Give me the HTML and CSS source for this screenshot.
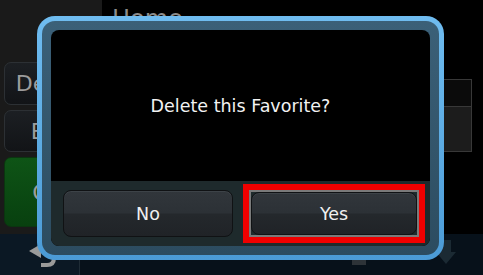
FILE: index.html
```html
<!DOCTYPE html>
<html>
<head>
<meta charset="utf-8">
<link rel="stylesheet" href="styles.css">
</head>
<body>
<div class="app">
  <aside class="side">
    <div class="side-btn">Delete</div>
    <div class="side-btn">Edit</div>
    <div class="side-btn go">Go!</div>
  </aside>
  <main class="main">
    <div class="title">Home</div>
    <div class="rows">
      <div class="row dark"></div>
      <div class="row"></div>
    </div>
  </main>
  <footer class="bar">
    <div class="bar-back">
      <svg width="30" height="30" viewBox="0 0 30 30">
        <polygon points="2,8 14,1 14,15" fill="#9a9a9a"/>
        <path d="M12 8 H20 Q27 8 27 15 Q27 22 20 22 H14" fill="none" stroke="#9a9a9a" stroke-width="4"/>
      </svg>
    </div>
    <div class="bar-rest">
      <span class="bar-mark"></span>
      <svg class="bar-down" width="20" height="26" viewBox="0 0 20 26">
        <polygon points="5,0 15,0 15,12 20,12 10,24 0,12 5,12" fill="#1b2a33"/>
      </svg>
    </div>
  </footer>
</div>

<div class="dialog">
  <div class="dialog-ring">
    <div class="dialog-inner">
      <div class="dialog-msg">Delete this Favorite?</div>
      <div class="dialog-actions">
        <div class="btn">No</div>
        <div class="btn-frame"><div class="btn">Yes</div></div>
      </div>
    </div>
  </div>
</div>
</body>
</html>
```
FILE: styles.css
```css
html, body {
  margin: 0;
  padding: 0;
  width: 483px;
  height: 275px;
  overflow: hidden;
  background: #000;
  font-family: "DejaVu Sans", "Liberation Sans", sans-serif;
}

.app {
  width: 483px;
  height: 275px;
  display: grid;
  grid-template-columns: 102px 1fr;
  grid-template-rows: 234px 41px;
}

.side {
  background: #1a1a1a;
  display: flex;
  flex-direction: column;
  gap: 5px;
  padding: 62px 0 0 4px;
  box-sizing: border-box;
}

.side-btn {
  width: 96px;
  height: 43px;
  box-sizing: border-box;
  border: 1px solid #2c3034;
  border-radius: 7px;
  background: linear-gradient(#1c1f23, #121417);
  color: #9c9c9c;
  font-size: 22px;
  display: flex;
  align-items: center;
  justify-content: center;
}

.side-btn + .side-btn {
  height: 42px;
}

.side-btn.go {
  height: 70px;
  background: linear-gradient(#0e5416, #08400f);
  border-color: #0b3510;
}

.main {
  padding-left: 10px;
  display: flex;
  flex-direction: column;
}

.title {
  margin-top: 7px;
  font-size: 24px;
  line-height: 24px;
  color: #8c8c8c;
}

.rows {
  margin-top: 48px;
  width: 360px;
  display: flex;
  flex-direction: column;
}

.row {
  height: 45px;
  box-sizing: border-box;
  background: #1c1c1c;
  border: 1px solid #383838;
  border-top: none;
}

.row.dark {
  height: 28px;
  background: #0b0b0b;
  border-top: 1px solid #383838;
}

.bar {
  grid-column: 1 / 3;
  display: flex;
  background: #07111a;
}

.bar-back {
  width: 80px;
  border-right: 1px solid #1f2c36;
  background: #0b1824;
  padding: 9px 0 0 27px;
  box-sizing: border-box;
}

.bar-rest {
  flex: 1;
  display: flex;
  align-items: flex-start;
  padding: 6px 0 0 272px;
}

.bar-mark {
  width: 14px;
  height: 7px;
  background: #2d3338;
  margin-top: 18px;
}

.bar-down {
  margin-left: 70px;
}

.dialog {
  position: absolute;
  left: 37px;
  top: 16px;
  width: 407px;
  height: 244px;
  box-sizing: border-box;
  padding: 5px;
  border-radius: 18px;
  background: linear-gradient(#6fbcf0, #4b9bd6);
}

.dialog-ring {
  height: 100%;
  box-sizing: border-box;
  padding: 9px;
  border-radius: 13px;
  background: linear-gradient(#3b6078, #2c4c60);
}

.dialog-inner {
  height: 100%;
  border-radius: 8px;
  overflow: hidden;
  display: flex;
  flex-direction: column;
  background: #000;
}

.dialog-msg {
  flex: 1;
  display: flex;
  align-items: center;
  justify-content: center;
  color: #f2f2f2;
  font-size: 17.5px;
  padding-top: 1px;
}

.dialog-actions {
  height: 65px;
  box-sizing: border-box;
  background: #1e2a2c;
  display: grid;
  grid-template-columns: 1fr 1fr;
  gap: 16px;
  padding: 9px 11px 9px 12px;
}

.btn {
  box-sizing: border-box;
  border: 1px solid #101214;
  border-radius: 8px;
  background: linear-gradient(#31363b 0%, #2c3136 48%, #24282c 52%, #202327 100%);
  box-shadow: inset 0 1px 0 #3d4348;
  color: #f0f0f0;
  font-size: 17.5px;
  display: flex;
  align-items: center;
  justify-content: center;
}

.btn-frame {
  display: flex;
  flex-direction: column;
  box-sizing: border-box;
  border: 2px solid #7a7a7a;
  outline: 6px solid #f00000;
  background: #1e2a2c;
}

.btn-frame .btn {
  flex: 1;
}
```
